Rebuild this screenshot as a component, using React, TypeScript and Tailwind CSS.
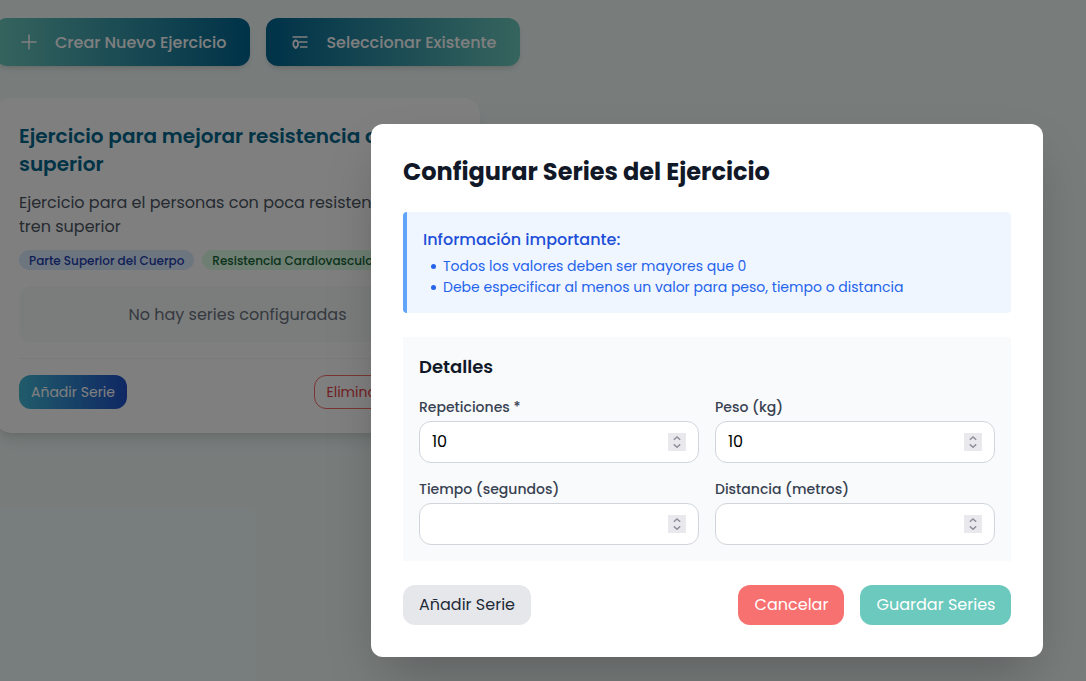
import type { ReactNode } from "react";

function Field({ label, value }: { label: string; value?: string }) {
  return (
    <div>
      <div className="text-sm font-medium text-[#374151]">{label}</div>
      <div className="mt-1 flex h-[42px] items-center justify-between rounded-xl border border-[#d1d5db] bg-white px-3">
        <span className="text-black">{value}</span>
        <svg className="h-[18px] w-[18px] bg-[#e9e9ed]" viewBox="0 0 18 18" fill="none" stroke="#8f8f9d" strokeWidth="1.5">
          <path d="M5.8 6.8 9 3.9l3.2 2.9M5.8 11.4 9 14.3l3.2-2.9" />
        </svg>
      </div>
    </div>
  );
}

function Tag({ className, children }: { className: string; children: ReactNode }) {
  return <span className={`h-5 whitespace-nowrap rounded-full px-2.5 text-xs leading-[21px] font-medium ${className}`}>{children}</span>;
}

function Bullet({ children }: { children: ReactNode }) {
  return (
    <li className="flex items-center">
      <span className="mt-px mr-[7px] ml-2 h-[5px] w-[5px] rounded-full bg-[#2563eb]" />
      {children}
    </li>
  );
}

export default function App() {
  return (
    <div className="relative h-[681px] w-full overflow-hidden bg-[#f0fbf9] font-['Poppins','Inter','Open_Sans',sans-serif]">
      <div className="-ml-[5px] w-[525px] pt-[18px]">
        <div className="flex gap-4">
          <button className="flex h-12 w-[255px] items-center whitespace-nowrap rounded-xl bg-linear-[to_right,#6cc9bd,#006491] pl-6 font-medium text-white shadow-md">
            <svg className="mr-4 h-5 w-5" viewBox="0 0 20 20" stroke="currentColor" strokeWidth="1.5">
              <path d="M10 2.5v15M2.5 10h15" />
            </svg>
            <span className="pt-0.5">Crear Nuevo Ejercicio</span>
          </button>
          <button className="flex h-12 w-[254px] items-center whitespace-nowrap rounded-xl bg-linear-[to_right,#006491,#6cc9bd] pl-6 font-medium text-white shadow-md">
            <svg className="mr-4 h-5 w-5" viewBox="0 0 20 20" fill="none" stroke="currentColor" strokeWidth="1.7">
              <path d="M2.5 5h15M9 10h8.500M10 15h7.500M5.700 7.500v1.500M5.700 15v2" />
              <ellipse cx="5.7" cy="12" rx="2.4" ry="3.3" />
            </svg>
            <span className="pt-0.5 pl-[0.4px]">Seleccionar Existente</span>
          </button>
        </div>
        <div className="mt-8 h-[335px] w-[485px] rounded-2xl bg-white p-6 shadow-lg">
          <h2 className="whitespace-nowrap text-xl font-semibold text-[#00668c]">
            Ejercicio para mejorar resistencia del tren
            <br />
            superior
          </h2>
          <p className="mt-[13px] whitespace-nowrap text-[#4b5563]">
            Ejercicio para el personas con poca resistencia en
            <br />
            tren superior
          </p>
          <div className="mt-[11px] flex gap-2">
            <Tag className="bg-[#dbeafe] text-[#1e40af]">Parte Superior del Cuerpo</Tag>
            <Tag className="bg-[#dcfce7] text-[#166534]">Resistencia Cardiovascular</Tag>
          </div>
          <div className="mt-4 rounded-xl bg-[#f7fbfa] px-4 pt-[17px] pb-[15px] text-center text-[#6b7280]">No hay series configuradas</div>
          <div className="mt-4 flex justify-between border-t border-[#f3f4f6] pt-4">
            <button className="h-[34px] w-[108px] rounded-xl bg-linear-[to_right,#41b8d5,#1f50c8] text-sm text-white">Añadir Serie</button>
            <button className="h-[34px] w-[142px] whitespace-nowrap rounded-xl border border-[#f26a6a] pl-[11.5px] text-left text-sm text-[#e83f48]">Eliminar Ejercicio</button>
          </div>
        </div>
      </div>
      <div className="absolute inset-0 flex items-start bg-black/50 pt-[124px] pl-[371px]">
        <div className="h-[533px] w-[672px] rounded-xl bg-white p-8 shadow-2xl">
          <h1 className="whitespace-nowrap text-2xl font-bold text-[#111827]">Configurar Series del Ejercicio</h1>
          <div className="mt-6 rounded border-l-4 border-[#60a5fa] bg-[#eff6ff] p-4">
            <div className="font-medium text-[#1d4ed8]">Información importante:</div>
            <ul className="mt-1 flex flex-col gap-px text-sm text-[#2563eb]">
              <Bullet>Todos los valores deben ser mayores que 0</Bullet>
              <Bullet>Debe especificar al menos un valor para peso, tiempo o distancia</Bullet>
            </ul>
          </div>
          <div className="mt-6 bg-[#f9fafb] p-4">
            <h2 className="text-lg font-semibold text-[#111827]">Detalles</h2>
            <div className="mt-4 grid grid-cols-2 gap-4">
              <Field label="Repeticiones *" value="10" />
              <Field label="Peso (kg)" value="10" />
              <Field label="Tiempo (segundos)" />
              <Field label="Distancia (metros)" />
            </div>
          </div>
          <div className="mt-6 flex">
            <button className="h-10 w-32 rounded-xl bg-[#e5e7eb] text-[#1f2937]">Añadir Serie</button>
            <button className="ml-auto h-10 w-[106px] rounded-xl bg-[#f87171] pl-px text-white">Cancelar</button>
            <button className="ml-4 h-10 w-[151px] rounded-xl bg-[#6cc9bd] pl-px text-white">Guardar Series</button>
          </div>
        </div>
      </div>
    </div>
  );
}
